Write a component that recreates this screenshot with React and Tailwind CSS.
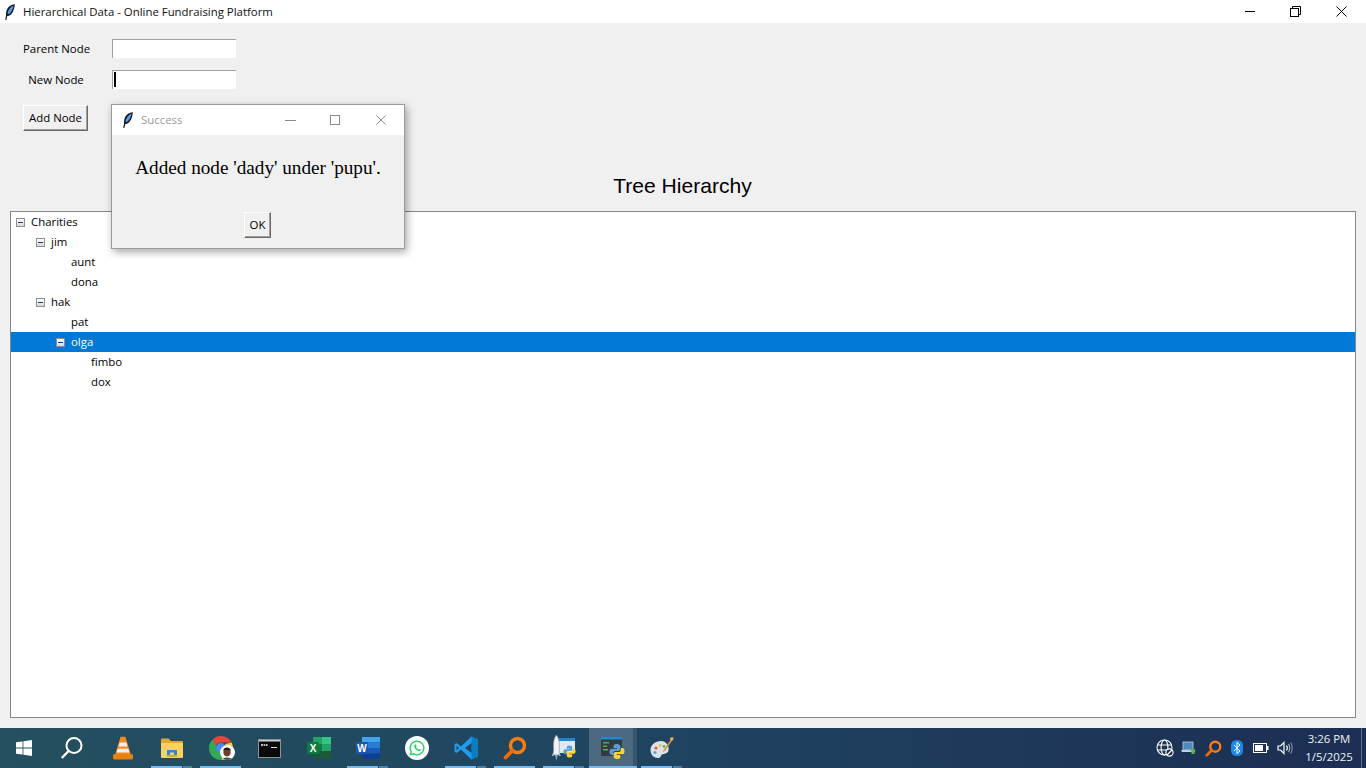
import React from 'react';

const treeRows = [
  { label: 'Charities', depth: 0, open: true },
  { label: 'jim', depth: 1, open: true },
  { label: 'aunt', depth: 2 },
  { label: 'dona', depth: 2 },
  { label: 'hak', depth: 1, open: true },
  { label: 'pat', depth: 2 },
  { label: 'olga', depth: 2, open: true, selected: true },
  { label: 'fimbo', depth: 3 },
  { label: 'dox', depth: 3 },
];

const Feather = ({ className }) => (
  <svg viewBox="0 0 10 16" className={className}>
    <path d="M9.8 .2C5.4 .6 1.6 3.6 1.2 8.4L1.2 12.2 4 11.8C7.4 10 9.6 5 9.8 .2Z" fill="#0d1420" />
    <path d="M8.6 1.6C5.6 3 2.8 6 2.2 10.4L4 10C6.6 8.2 8 5 8.6 1.6Z" fill="#5a9ee0" />
    <path d="M2.2 9 .8 15.8" stroke="#0d1420" strokeWidth="1.2" fill="none" />
  </svg>
);

const TreeToggle = () => (
  <span className="w-[9px] h-[9px] border border-[#8e8f8f] bg-gradient-to-b from-white to-[#d8d8d8] flex items-center justify-center shrink-0">
    <span className="w-[5px] h-px bg-[#1c3f7c]" />
  </span>
);

const TreeRow = ({ label, depth, open, selected }) => (
  <div
    className={`h-5 flex items-center relative ${selected ? 'bg-[#0078d7] text-white' : 'text-black'}`}
    style={{ paddingLeft: depth * 20 + 20 }}
  >
    {open && (
      <span className="absolute top-[6px]" style={{ left: depth * 20 + 5 }}>
        <TreeToggle />
      </span>
    )}
    <span>{label}</span>
  </div>
);

const WinLogo = () => (
  <svg viewBox="0 0 16 16" className="w-4 h-4 -ml-px">
    <path d="M0 2.3 6.6 1.4V7.6H0ZM7.4 1.3 16 0V7.6H7.4ZM0 8.4H6.6V14.6L0 13.7ZM7.4 8.4H16V16L7.4 14.7Z" fill="#fff" />
  </svg>
);

const SearchIcon = () => (
  <svg viewBox="0 0 24 24" className="w-[24px] h-[24px] -ml-[4px]">
    <circle cx="14" cy="9.5" r="7.5" fill="none" stroke="#fff" strokeWidth="2" />
    <path d="M8.6 15 1.8 22" stroke="#fff" strokeWidth="2.4" fill="none" />
  </svg>
);

const VlcIcon = () => (
  <svg viewBox="0 0 22 24" className="w-[22px] h-[24px]">
    <path d="M8.6 .8H13.4L19 19H3Z" fill="#f58a1f" />
    <path d="M7.6 6.5H14.4L15.4 10.4H6.5ZM5.6 12.8H16.4L17.4 16.4H4.6Z" fill="#eee" />
    <path d="M1 19.4C1 18 3 18 3.5 18H18.5C19 18 21 18 21 19.4V22C21 23 20 23.5 19 23.5H3C2 23.5 1 23 1 22Z" fill="#e8820f" />
  </svg>
);

const FolderIcon = () => (
  <svg viewBox="0 0 22 20" className="w-[22px] h-[20px]">
    <path d="M0 2C0 1 .5 .5 1.5 .5H7.5L10 3H21C21.6 3 22 3.4 22 4V7H0Z" fill="#e2a72e" />
    <rect y="5" width="22" height="15" rx="1" fill="#fbd35c" />
    <path d="M6 12H16V17H13V14.5H9V17H6Z" fill="#2d8ccc" />
    <rect x="6" y="17" width="10" height="2" fill="#e2a72e" />
  </svg>
);

const ChromeIcon = () => (
  <span className="relative w-[24px] h-[24px]">
    <svg viewBox="0 0 24 24" className="w-[24px] h-[24px]">
      <path d="M12 0A12 12 0 0 1 22.6 6.5H12A5.5 5.5 0 0 0 6.9 9.7L3.6 3.4A12 12 0 0 1 12 0Z" fill="#e8453a" />
      <path d="M22.6 6.5A12 12 0 0 1 12 24L17 14.8A5.5 5.5 0 0 0 16 8Z" fill="#fcc934" />
      <path d="M3.6 3.4 8.6 12A5.5 5.5 0 0 0 15 17L12 24A12 12 0 0 1 3.6 3.4Z" fill="#35a853" />
      <circle cx="12" cy="12" r="5" fill="#4a8af4" />
    </svg>
    <span className="absolute left-[11px] top-[9px] w-[15px] h-[15px] rounded-full bg-white flex items-center justify-center overflow-hidden">
      <svg viewBox="0 0 14 14" className="w-[14px] h-[14px]">
        <ellipse cx="7" cy="6" rx="3.6" ry="4.4" fill="#6e3f2c" />
        <path d="M3.2 4.6C3.8 .8 10.2 .8 10.8 4.6 9 3.4 5 3.4 3.2 4.6Z" fill="#1d1413" />
        <path d="M2 14C2.4 10.8 11.6 10.8 12 14Z" fill="#4a4a50" />
      </svg>
    </span>
  </span>
);

const CmdIcon = () => (
  <svg viewBox="0 0 23 19" className="w-[23px] h-[19px]">
    <rect width="23" height="19" fill="#8f9395" />
    <rect x="1" y="1" width="21" height="1.6" fill="#c9cccd" />
    <rect x="1" y="2.6" width="21" height="15.4" fill="#0a0a0a" />
    <path d="M3 5H5V7H3ZM5.6 5H7.4V7H5.6ZM8 5H9.6V7H8Z" fill="#b8b8b8" />
    <rect x="13" y="8" width="6" height="1" fill="#ddd" />
  </svg>
);

const ExcelIcon = () => (
  <svg viewBox="0 0 24 22" className="w-[24px] h-[22px]">
    <rect x="6" y="0" width="18" height="21" rx="1" fill="#21a366" />
    <rect x="15" y="0" width="9" height="7" fill="#33c481" />
    <rect x="6" y="7" width="9" height="7" fill="#107c41" />
    <rect x="15" y="14" width="9" height="7" fill="#185c37" />
    <rect x="6" y="14" width="9" height="7" fill="#185c37" />
    <rect x="0" y="5" width="12" height="12" rx="1" fill="#0f7b40" />
    <text x="6" y="14.5" textAnchor="middle" fontSize="10" fontWeight="700" fill="#fff" fontFamily="Liberation Sans, sans-serif">X</text>
  </svg>
);

const WordIcon = () => (
  <svg viewBox="0 0 24 22" className="w-[24px] h-[22px]">
    <rect x="6" y="0" width="18" height="5.5" fill="#41a5ee" />
    <rect x="6" y="5.5" width="18" height="5.5" fill="#2b7cd3" />
    <rect x="6" y="11" width="18" height="5.5" fill="#185abd" />
    <rect x="6" y="16.5" width="18" height="5.5" fill="#103f91" />
    <rect x="0" y="5" width="12" height="12" rx="1" fill="#1a56b4" />
    <text x="6" y="14.5" textAnchor="middle" fontSize="10" fontWeight="700" fill="#fff" fontFamily="Liberation Sans, sans-serif">W</text>
  </svg>
);

const WhatsappIcon = () => (
  <svg viewBox="0 0 24 24" className="w-[24px] h-[24px]">
    <circle cx="12" cy="12" r="12" fill="#fff" />
    <path d="M12 5.2A6.8 6.8 0 0 0 6.2 15.6L5.4 18.6 8.5 17.8A6.8 6.8 0 1 0 12 5.2Z" fill="none" stroke="#25d366" strokeWidth="1.4" />
    <path d="M9.8 8.6C9 9.2 8.9 10.4 9.6 11.7 10.5 13.4 12.2 14.9 14 15.2 15 15.3 15.9 14.7 16 13.8L14.5 12.9 13.7 13.7C12.6 13.3 11.5 12.2 11 11.1L11.7 10.3 10.8 8.6Z" fill="#25d366" />
  </svg>
);

const VscodeIcon = () => (
  <svg viewBox="0 0 24 24" className="w-[24px] h-[24px]">
    <path d="M17.5 .5 24 3.4V20.6L17.5 23.5 7 13.5 2.6 17 .5 15.8V8.2L2.6 7 7 10.5Z" fill="#1f9cf0" />
    <path d="M17.5 .5 24 3.4V20.6L17.5 23.5Z" fill="#0a7cc2" />
    <path d="M17.5 7 11 12 17.5 17ZM2.6 9.4V14.6L5 12Z" fill="#22435a" />
  </svg>
);

const MagnifierIcon = ({ className }) => (
  <svg viewBox="0 0 24 24" className={className}>
    <circle cx="14.5" cy="9.5" r="7" fill="none" stroke="#f97d10" strokeWidth="3.4" />
    <path d="M9.5 14.5 2.5 21.5" stroke="#ee6c08" strokeWidth="3.8" strokeLinecap="round" fill="none" />
  </svg>
);

const PythonBadge = ({ className }) => (
  <svg viewBox="0 0 16 16" className={className}>
    <path d="M8 .5C5 .5 4.6 1.6 4.6 3V4.6H8.2V5.2H2.8C1.2 5.2 .5 6.4 .5 8.2S1.2 11.4 2.8 11.4H4.2V9.6C4.2 8.2 5.2 7.4 6.4 7.4H9.6C10.8 7.4 11.4 6.6 11.4 5.6V3C11.4 1.4 10 .5 8 .5Z" fill="#5a9fd4" />
    <path d="M8 15.5C11 15.5 11.4 14.4 11.4 13V11.4H7.8V10.8H13.2C14.8 10.8 15.5 9.6 15.5 7.8S14.8 4.6 13.2 4.6H11.8V6.4C11.8 7.8 10.8 8.6 9.6 8.6H6.4C5.2 8.6 4.6 9.4 4.6 10.4V13C4.6 14.6 6 15.5 8 15.5Z" fill="#ffd43b" />
  </svg>
);

const RocketPythonIcon = () => (
  <span className="relative w-[24px] h-[26px]">
    <svg viewBox="0 0 24 26" className="w-[24px] h-[26px]">
      <rect x="6" y="3" width="17" height="15" fill="#dfe8ef" />
      <rect x="6" y="3" width="17" height="3" fill="#2f7fc1" />
      <path d="M4.4 0C7 3 7.6 8 7.2 14V20H1.6V14C1.2 8 1.8 3 4.4 0Z" fill="#f2f4f5" stroke="#7d8a93" strokeWidth=".6" />
      <path d="M1.6 15 0 21H1.6ZM7.2 15 8.6 21H7.2Z" fill="#c7d0d6" />
      <path d="M3 20H5.8L4.4 26Z" fill="#68a8dd" />
    </svg>
    <PythonBadge className="absolute left-[11px] top-[9px] w-[13px] h-[15px]" />
  </span>
);

const PythonWindowIcon = () => (
  <span className="relative w-[24px] h-[24px]">
    <svg viewBox="0 0 24 24" className="w-[24px] h-[24px]">
      <rect y="1" width="21" height="19" fill="#333a40" />
      <rect y="1" width="21" height="2.5" fill="#1e8ad6" />
      <path d="M2 6H8V7.5H2ZM2 9.5H6V11H2ZM2 13H7V14.5H2Z" fill="#4caf50" />
    </svg>
    <PythonBadge className="absolute left-[8px] top-[7px] w-[16px] h-[17px]" />
  </span>
);

const PaletteIcon = () => (
  <svg viewBox="0 0 24 24" className="w-[24px] h-[24px]">
    <path d="M11 5C5 5 .5 9 .5 14S4 22 8 22C11 22 10.5 19.5 12 18.5 14 17.5 17.5 18 18.5 14.5 19.5 10 16 5 11 5Z" fill="#dce3e8" />
    <circle cx="6" cy="12" r="1.6" fill="#e5554f" />
    <circle cx="10" cy="9.5" r="1.5" fill="#f0c13a" />
    <circle cx="5" cy="16.5" r="1.6" fill="#4aa5e0" />
    <circle cx="14" cy="10.5" r="1.4" fill="#58b368" />
    <path d="M22.5 .8 23.8 2 15 15 12.4 16Z" fill="#d3924a" />
    <path d="M21 1 23.5 3.2 22 5 19.8 3Z" fill="#e9b15f" />
  </svg>
);

const taskbarApps = [
  { key: 'windows', icon: <WinLogo /> },
  { key: 'search', icon: <SearchIcon /> },
  { key: 'vlc', icon: <VlcIcon /> },
  { key: 'explorer', icon: <FolderIcon />, running: 'split' },
  { key: 'chrome', icon: <ChromeIcon />, running: 'full' },
  { key: 'cmd', icon: <CmdIcon /> },
  { key: 'excel', icon: <ExcelIcon /> },
  { key: 'word', icon: <WordIcon />, running: 'split' },
  { key: 'whatsapp', icon: <WhatsappIcon /> },
  { key: 'vscode', icon: <VscodeIcon />, running: 'split' },
  { key: 'magnifier', icon: <MagnifierIcon className="w-[24px] h-[24px]" />, running: 'full' },
  { key: 'rocket', icon: <RocketPythonIcon />, running: 'split' },
  { key: 'python', icon: <PythonWindowIcon />, running: 'active' },
  { key: 'palette', icon: <PaletteIcon />, running: 'split' },
];

const TaskbarItem = ({ icon, running }) => (
  <div className="w-[49px] h-full relative flex items-center justify-center shrink-0">
    {running === 'active' && (
      <span className="absolute inset-y-0 left-[1px] right-0 flex">
        <span className="w-[44px] bg-white/20" />
        <span className="flex-1 bg-white/10" />
      </span>
    )}
    <span className="relative flex">{icon}</span>
    {running === 'full' && <span className="absolute bottom-0 left-[4px] right-[4px] h-[2px] bg-[#76b9ed]" />}
    {running === 'active' && <span className="absolute bottom-0 left-[1px] right-0 h-[2px] bg-[#76b9ed]" />}
    {running === 'split' && (
      <span className="absolute bottom-0 left-[4px] right-[4px] h-[2px] flex">
        <span className="w-[31px] bg-[#76b9ed]" />
        <span className="flex-1 bg-[#76b9ed]/50 ml-px" />
      </span>
    )}
  </div>
);

const Tray = () => (
  <div className="ml-auto h-full flex items-center text-white">
    <span className="w-6 flex justify-center">
      <svg viewBox="0 0 18 18" className="w-[18px] h-[18px]" fill="none" stroke="#fff" strokeWidth="1.1">
        <circle cx="8.5" cy="8.5" r="7.5" />
        <ellipse cx="8.5" cy="8.5" rx="3.4" ry="7.5" />
        <path d="M1 6H16M1 11H16" />
        <circle cx="13.5" cy="13.5" r="3.6" fill="#1d3050" />
        <path d="M11 16 16 11" />
      </svg>
    </span>
    <span className="w-6 flex justify-center">
      <svg viewBox="0 0 16 14" className="w-4 h-[14px]">
        <rect x="2" y="1" width="10" height="8" fill="#4d8ac0" stroke="#bcd" strokeWidth=".8" />
        <path d="M0 9H13L14 11H1Z" fill="#c6ccd2" />
        <path d="M9 10 12 7 15 10 13.5 10 13.5 13H10.5V10Z" fill="#58b947" />
      </svg>
    </span>
    <span className="w-6 flex justify-center">
      <MagnifierIcon className="w-[17px] h-[17px]" />
    </span>
    <span className="w-6 flex justify-center">
      <svg viewBox="0 0 12 16" className="w-3 h-4">
        <rect width="12" height="16" rx="5.5" fill="#1e88e5" />
        <path d="M3 5 9 11 6 13.6V2.4L9 5 3 11" fill="none" stroke="#fff" strokeWidth="1" />
      </svg>
    </span>
    <span className="w-6 flex justify-center">
      <svg viewBox="0 0 16 10" className="w-4 h-[10px]">
        <rect x=".5" y=".5" width="13" height="9" fill="none" stroke="#fff" />
        <rect x="2" y="2" width="8" height="6" fill="#fff" />
        <rect x="14" y="3" width="1.5" height="4" fill="#fff" />
      </svg>
    </span>
    <span className="w-6 flex justify-center">
      <svg viewBox="0 0 17 14" className="w-[17px] h-[14px]" fill="none" stroke="#fff" strokeWidth="1.2">
        <path d="M1 5H3.5L7 1.5V12.5L3.5 9H1Z" />
        <path d="M9.5 4.5C10.5 6 10.5 8 9.5 9.5" />
        <path d="M11.5 3C13 5 13 9 11.5 11" stroke="#aab4c0" />
        <path d="M13.5 1.5C15.8 4.5 15.8 9.5 13.5 12.5" stroke="#7f8b9c" />
      </svg>
    </span>
    <div className="w-[58px] ml-[3px] text-center leading-[18px] text-[#eef2f6]">
      <div>3:26 PM</div>
      <div>1/5/2025</div>
    </div>
    <span className="w-px h-full ml-[3px] bg-[#5d7288]" />
    <span className="w-[4px]" />
  </div>
);

const WindowFrameButtons = () => (
  <div className="ml-auto flex items-center h-full pr-[2px]">
    <svg viewBox="0 0 10 1" className="w-[10px] h-px mr-[35px]">
      <rect width="10" height="1" fill="#000" />
    </svg>
    <svg viewBox="0 0 11 11" className="w-[11px] h-[11px] mr-[35px]" fill="none" stroke="#000" strokeWidth="1">
      <rect x=".5" y="2.5" width="8" height="8" />
      <path d="M2.5 2.5V.5H10.5V8.5H8.5" />
    </svg>
    <svg viewBox="0 0 11 11" className="w-[11px] h-[11px] mr-[17px]" fill="none" stroke="#000" strokeWidth="1">
      <path d="M.5 .5 10.5 10.5M10.5 .5 .5 10.5" />
    </svg>
  </div>
);

const SuccessDialog = () => (
  <div className="absolute left-[111px] top-[104px] w-[294px] h-[145px] border border-[#9a9a9a] bg-[#f0f0f0] shadow-[2px_3px_8px_rgba(0,0,0,0.35)] flex flex-col">
    <div className="h-[30px] bg-white flex items-center pl-[11px] text-[#9a9a9a] shrink-0">
      <Feather className="w-[10px] h-[16px]" />
      <span className="ml-[8px]">Success</span>
      <div className="ml-auto flex items-center pr-[18px]">
        <svg viewBox="0 0 11 1" className="w-[11px] h-px mr-[34px]">
          <rect width="11" height="1" fill="#8a8a8a" />
        </svg>
        <svg viewBox="0 0 10 10" className="w-[10px] h-[10px] mr-[36px]" fill="none" stroke="#8a8a8a" strokeWidth="1">
          <rect x=".5" y=".5" width="9" height="9" />
        </svg>
        <svg viewBox="0 0 10 10" className="w-[10px] h-[10px]" fill="none" stroke="#8a8a8a" strokeWidth="1">
          <path d="M.5 .5 9.5 9.5M9.5 .5 .5 9.5" />
        </svg>
      </div>
    </div>
    <div className="pt-[22px] text-center text-[19.2px] leading-[22px] text-black font-['Liberation_Serif',serif]">
      Added node 'dady' under 'pupu'.
    </div>
    <button className="mt-[33px] ml-[132px] w-[27px] h-[26px] bg-[#f0f0f0] border border-t-white border-l-white border-r-[#696969] border-b-[#696969] shadow-[inset_-1px_-1px_0_#a0a0a0] text-black">
      OK
    </button>
  </div>
);

const App = () => {
  return (
    <div className="w-[1366px] h-[768px] flex flex-col overflow-hidden bg-[#f0f0f0] text-[11.4px] relative font-['Open_Sans',sans-serif]">
      <div className="h-[23px] bg-white flex items-center pl-[5px] shrink-0 text-[#111]">
        <Feather className="w-[10px] h-[16px]" />
        <span className="ml-[8px]">Hierarchical Data - Online Fundraising Platform</span>
        <WindowFrameButtons />
      </div>

      <div className="flex-1 flex flex-col min-h-0 px-[10px]">
        <div className="pl-[13px] pt-[16px]">
          <div className="flex items-center h-[19px]">
            <label className="w-[66px] text-center whitespace-nowrap">Parent Node</label>
            <span className="ml-[23px] w-[124px] h-[19px] bg-white border-t border-l border-[#a0a0a0]" />
          </div>
          <div className="flex items-center h-[19px] mt-[12px]">
            <label className="w-[66px] text-center whitespace-nowrap">New Node</label>
            <span className="ml-[23px] w-[124px] h-[19px] bg-white border-t border-l border-[#a0a0a0] pl-px pt-px">
              <span className="block w-[2px] h-[15px] bg-black" />
            </span>
          </div>
          <button className="mt-[16px] block w-[65px] h-[26px] bg-[#f0f0f0] border border-t-white border-l-white border-r-[#696969] border-b-[#696969] shadow-[inset_-1px_-1px_0_#a0a0a0] text-black">
            Add Node
          </button>
        </div>

        <div className="mt-[42px] h-[26px] mb-[1px] pr-[1px] flex items-center justify-center text-[21.1px] text-black font-['Liberation_Sans',sans-serif]">
          Tree Hierarchy
        </div>

        <div className="mt-[11px] h-[507px] w-[1346px] bg-white border border-[#828790]">
          {treeRows.map((row) => (
            <TreeRow key={row.label} {...row} />
          ))}
        </div>
      </div>

      <div className="h-[40px] mt-[10px] shrink-0 flex items-center bg-gradient-to-r from-[#24505f] via-[#1f4360] to-[#1c2e53]">
        {taskbarApps.map(({ key, icon, running }) => (
          <TaskbarItem key={key} icon={icon} running={running} />
        ))}
        <Tray />
      </div>

      <SuccessDialog />
    </div>
  );
};

export default App;
